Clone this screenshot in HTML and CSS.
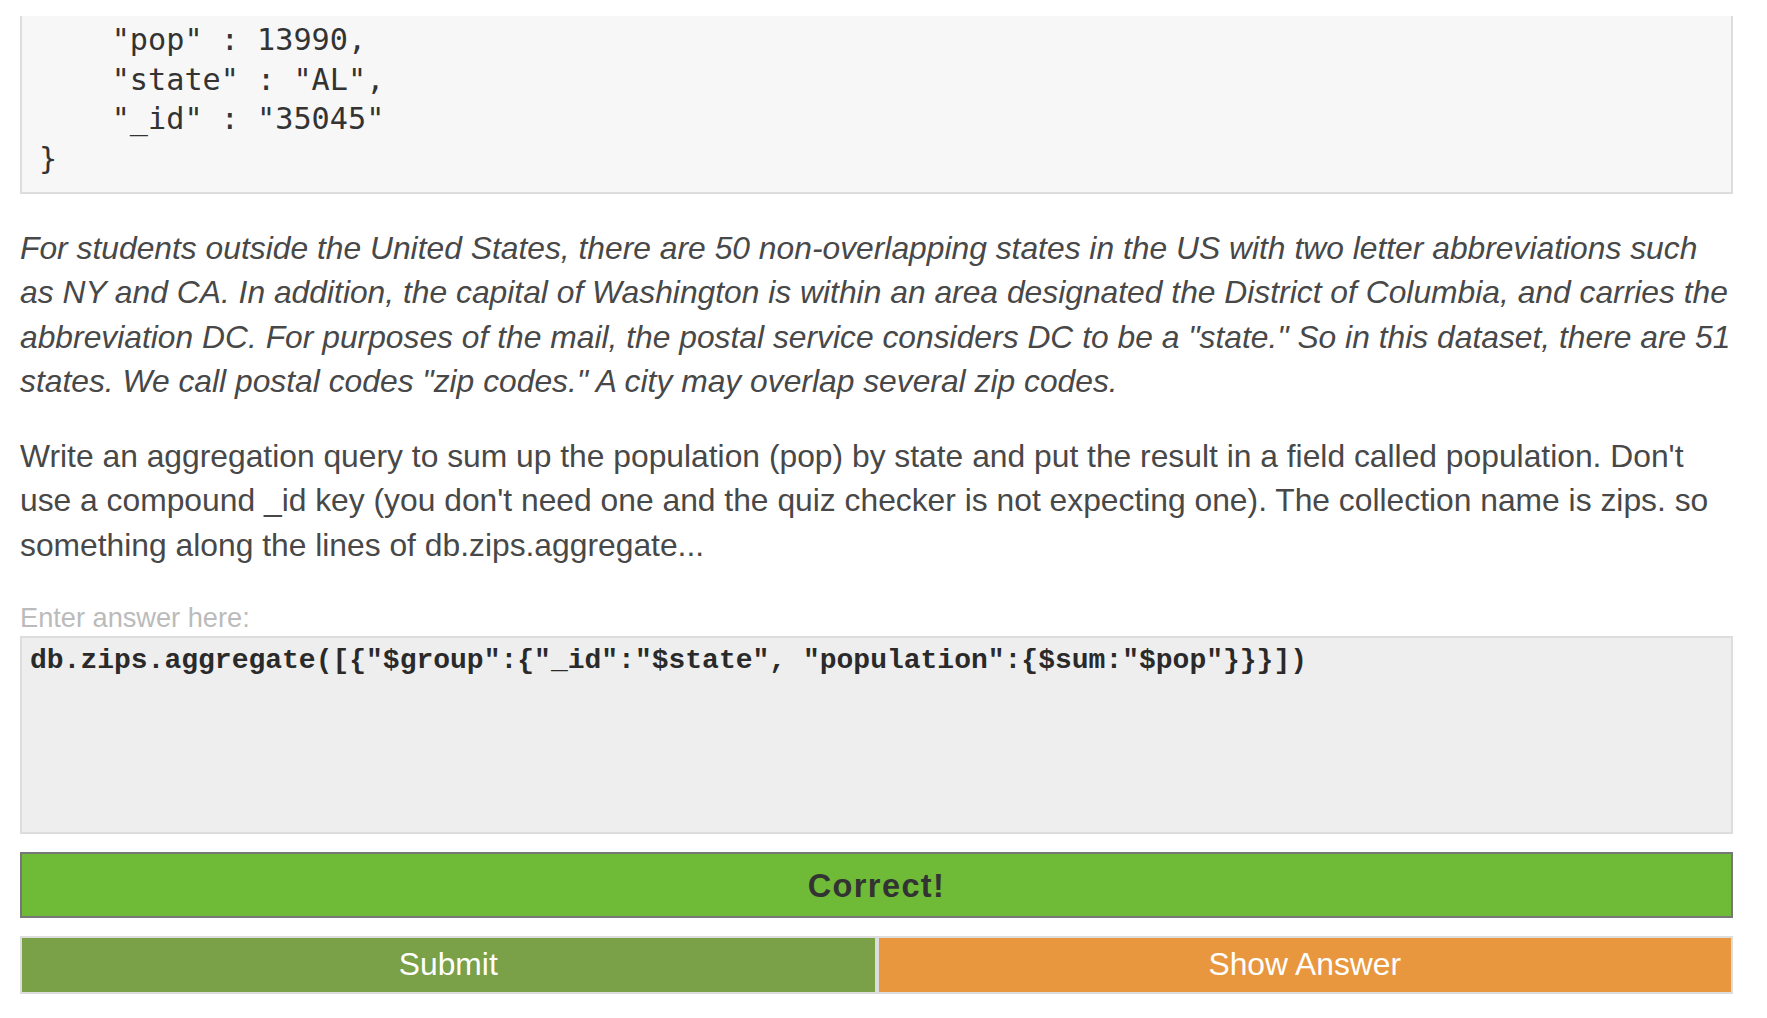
FILE: index.html
```
<!DOCTYPE html>
<html lang="en">
<head>
<meta charset="utf-8">
<title>Quiz: Using $sum</title>
<link rel="stylesheet" href="styles.css">
</head>
<body>
<div class="page">
<pre class="sample">    "pop" : 13990,
    "state" : "AL",
    "_id" : "35045"
}</pre>
<p class="note">For students outside the United States, there are 50 non-overlapping states in the US with two letter abbreviations such<br>as NY and CA. In addition, the capital of Washington is within an area designated the District of Columbia, and carries the<br>abbreviation DC. For purposes of the mail, the postal service considers DC to be a "state." So in this dataset, there are 51<br>states. We call postal codes "zip codes." A city may overlap several zip codes.</p>
<p class="task">Write an aggregation query to sum up the population (pop) by state and put the result in a field called population. Don't<br>use a compound _id key (you don't need one and the quiz checker is not expecting one). The collection name is zips. so<br>something along the lines of db.zips.aggregate...</p>
<label class="answer-label" for="answer">Enter answer here:</label>
<textarea class="answer" id="answer" readonly spellcheck="false">db.zips.aggregate([{"$group":{"_id":"$state", "population":{$sum:"$pop"}}}])</textarea>
<div class="result">Correct!</div>
<div class="actions">
<button class="btn btn-submit" type="button">Submit</button>
<button class="btn btn-show" type="button">Show Answer</button>
</div>
</div>
</body>
</html>
```
FILE: styles.css
```
html, body {
  margin: 0;
  padding: 0;
  background: #ffffff;
}

.page {
  width: 1713px;
  padding: 16px 0 0 20px;
  display: flex;
  flex-direction: column;
  font-family: "Liberation Sans", Arial, sans-serif;
  color: #484848;
}

.sample {
  margin: 0;
  padding: 4px 15px 13.5px 17px;
  background: #f7f7f7;
  border: 2px solid #dddddd;
  border-top: 0;
  font-family: "DejaVu Sans Mono", monospace;
  font-size: 30.2px;
  line-height: 39.5px;
  color: #333333;
}

.note,
.task {
  margin: 0;
  font-size: 31.8px;
  line-height: 44.3px;
  white-space: nowrap;
}

.note {
  margin-top: 32.5px;
  font-style: italic;
}

.task {
  margin-top: 31px;
}

.answer-label {
  margin-top: 35.5px;
  font-size: 27.2px;
  line-height: 30px;
  color: #bbbbbb;
}

.answer {
  box-sizing: border-box;
  margin: 3.6px 0 0 0;
  width: 100%;
  height: 198px;
  padding: 7px 8px 3px 8px;
  background: #eeeeee;
  border: 2px solid #dddddd;
  border-radius: 0;
  outline: none;
  resize: none;
  overflow: hidden;
  font-family: "Liberation Mono", "Courier New", monospace;
  font-weight: bold;
  font-size: 28px;
  line-height: 32px;
  color: #2a2a2a;
}

.result {
  box-sizing: border-box;
  margin-top: 18px;
  height: 66px;
  display: flex;
  align-items: center;
  justify-content: center;
  padding-top: 2px;
  background: #6fba37;
  border: 2px solid #777777;
  font-weight: bold;
  font-size: 32.5px;
  letter-spacing: 1.4px;
  color: #333333;
}

.actions {
  margin-top: 17.5px;
  display: flex;
  height: 58.5px;
}

.btn {
  flex: 1 1 0;
  box-sizing: border-box;
  margin: 0;
  height: 100%;
  border: 2px solid #dddddd;
  border-radius: 0;
  padding: 0 0 1px 0;
  font-family: "Liberation Sans", Arial, sans-serif;
  font-size: 31.8px;
  color: #ffffff;
  cursor: pointer;
}

.btn-submit {
  background: #7aa048;
}

.btn-show {
  background: #e8973e;
}
```
